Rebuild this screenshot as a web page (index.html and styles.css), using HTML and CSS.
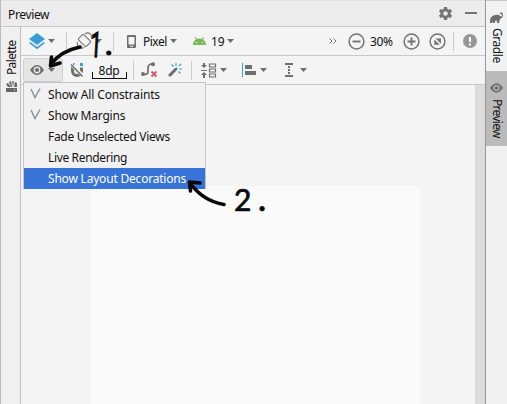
FILE: index.html
```html
<!DOCTYPE html>
<html lang="en">
<head>
<meta charset="utf-8">
<title>Preview</title>
<link rel="stylesheet" href="styles.css">
</head>
<body>
<div class="window">
  <div class="panel">
    <header class="header">
      <span class="title">Preview</span>
      <svg class="gear" width="13" height="13" viewBox="0 0 13 13"><path fill="#737373" fill-rule="evenodd" d="M5 0h3l.4 2 1.200.7 2-.7 1.400 2.500-1.500 1.300v1.400L13 8.500l-1.400 2.500-2-.7-1.200.7L8 13H5l-.4-2-1.200-.7-2 .7L0 8.500l1.500-1.300V5.800L0 4.500 1.400 2l2 .7L4.600 2zM6.500 4.200a2.300 2.300 0 1 0 0 4.600 2.300 2.300 0 0 0 0-4.600z"/></svg>
      <span class="minimize"></span>
    </header>
    <div class="body">
      <aside class="palette">
        <span class="side-text palette-text">Palette</span>
        <svg width="11" height="11" viewBox="0 0 11 11"><path fill="#666" d="M0 7h11v4H0zM0 3l2-1 3 4H2zM3 1l2-1 1 6H5zM6 0l2 .5L7 6zM9 1l2 1v4H8z"/><path fill="#fff" d="M8 8.500h1v1H8z"/></svg>
      </aside>
      <main class="designer">
        <div class="toolbar top">
          <svg class="layers" width="16" height="17" viewBox="0 0 16 17"><path fill="#389fd6" d="M8 0l8 6-8 6-8-6z"/><path fill="#389fd6" d="M0 10l1.300-1L8 14l6.700-5 1.300 1-8 6.300z"/></svg>
          <i class="caret c1"></i><i class="sep s1"></i>
          <svg class="rotate" width="17" height="17" viewBox="0 0 17 17" fill="none" stroke="#737373" stroke-width="1.100"><rect x="4.700" y="3" width="7.500" height="11" rx="1.200" transform="rotate(-45 8.500 8.500)"/><path d="M9 1.500c4-2 7.500 1 6.500 5.500M1.500 10c-1 4 2.500 7.500 6.500 5.500"/></svg>
          <i class="caret c2"></i><i class="sep s2"></i>
          <svg class="phone" width="9" height="13" viewBox="0 0 9 13"><path fill="#6e6e6e" fill-rule="evenodd" d="M1 0h7q1 0 1 1v11q0 1-1 1H1q-1 0-1-1V1q0-1 1-1zm.5 2v7.500h6V2zM3 10.700v1h3v-1z"/></svg>
          <span class="pixel">Pixel</span><i class="caret c3"></i>
          <svg class="android" width="13" height="8" viewBox="0 0 13 8"><path d="M0 8c.1-2.500 1.200-4.500 3-5.500L1.700.5l.8-.4L4 2q2.500-.8 5 0L10.500.1l.8.4L10 2.500c1.800 1 2.900 3 3 5.500z" fill="#78b857"/><path fill="#fff" d="M3 5h1.200v1.200H3zM8.800 5H10v1.200H8.800z"/></svg>
          <span class="api">19</span><i class="caret c4"></i>
          <svg class="more" width="8" height="6" viewBox="0 0 8 6"><path d="M.5.5L3 3 .5 5.500M4.500.5L7 3 4.500 5.500" fill="none" stroke="#777"/></svg>
          <svg class="zoom-out" width="17" height="17" viewBox="0 0 17 17" fill="none" stroke="#737373"><circle cx="8.500" cy="8.500" r="7.400" stroke-width="1.500"/><path d="M4.500 8.500h8" stroke-width="1.900"/></svg>
          <span class="percent">30%</span>
          <svg class="zoom-in" width="17" height="17" viewBox="0 0 17 17" fill="none" stroke="#737373"><circle cx="8.500" cy="8.500" r="7.400" stroke-width="1.500"/><path d="M4.500 8.500h8M8.500 4.500v8" stroke-width="1.900"/></svg>
          <svg class="zoom-fit" width="17" height="17" viewBox="0 0 17 17"><circle cx="8.500" cy="8.500" r="7.400" fill="none" stroke="#737373" stroke-width="1.500"/><path fill="#737373" d="M6.500 5.500H12v5.300zM5.300 6.500v5.200h5.500z"/></svg>
          <i class="sep s3"></i>
          <svg class="alert" width="14" height="14" viewBox="0 0 14 14"><circle cx="7" cy="7" r="7" fill="#969696"/><path fill="#fff" d="M6 3h2v5H6zM6 9.500h2v2H6z"/></svg>
        </div>
        <div class="toolbar second">
          <button class="view" aria-label="View options">
            <svg width="14" height="10" viewBox="0 0 14 10"><path d="M0 5q7-10 14 0-7 10-14 0z" fill="#6e6e6e"/><circle cx="7" cy="5" r="3.400" fill="#e5e5e5"/><circle cx="7" cy="5" r="2" fill="#6e6e6e"/></svg><i class="caret"></i>
          </button>
          <svg class="magnet" width="14" height="14" viewBox="0 0 14 14"><path d="M2.500 4v4a4.500 4.500 0 0 0 9 0V4.500" fill="none" stroke="#6e6e6e" stroke-width="3"/><path d="M0 0l14 14" stroke="#f4f4f4" stroke-width="3.500"/><path d="M1 1.500l11.500 12" stroke="#6e6e6e" stroke-width="1.600"/><path fill="#389fd6" d="M10 0h3v3h-3zM3 0h1.500v2H3z"/></svg>
          <div class="dp">8dp</div><i class="sep s4"></i>
          <svg class="curve" width="17" height="16" viewBox="0 0 17 16"><path d="M2 12.500h2q3 0 3-3V6q0-4 4-4h1" fill="none" stroke="#6e6e6e" stroke-width="1.700"/><circle cx="2" cy="12" r="2" fill="#6e6e6e"/><circle cx="12" cy="2.300" r="2" fill="#6e6e6e"/><path d="M10.500 9.500l5 5m0-5l-5 5" stroke="#db5860" stroke-width="1.900"/></svg>
          <svg class="wand" width="14" height="14" viewBox="0 0 14 14"><path d="M1 13l7-7" stroke="#6e6e6e" stroke-width="3"/><path d="M7 7l2-2" stroke="#6e6e6e" stroke-width="2"/><path d="M8 0v3M3.500 1.500l2 2M11 3l2-2M11 6h3M10.500 8.500l2 2" stroke="#389fd6" stroke-width="1.100"/></svg>
          <i class="sep s5"></i>
          <svg class="pack" width="16" height="15" viewBox="0 0 16 15"><path d="M0 7h6v1H0zM2 0h2v2h2L3 5 0 2h2zM3 9l3 3H4v3H2v-3H0z" fill="#6e6e6e"/><path d="M8.500 1h6v3h-6zM8.500 6h6v3h-6zM8.500 11h6v3h-6z" fill="none" stroke="#6e6e6e" stroke-width="1.200"/></svg><i class="caret c5"></i>
          <svg class="align" width="14" height="14" viewBox="0 0 14 14"><path fill="#389fd6" d="M0 0h1v14H0z"/><path fill="#6e6e6e" d="M3 2h7v4H3zM3 8h11v4H3z"/></svg><i class="caret c6"></i>
          <svg class="guide" width="8" height="14" viewBox="0 0 8 14" fill="none" stroke="#6e6e6e" stroke-width="2"><path d="M0 1h8M0 13h8"/><path d="M4 3v8" stroke-dasharray="2 1"/></svg><i class="caret c7"></i>
        </div>
        <div class="canvas"><div class="surface"></div><div class="scrollbar"></div></div>
      </main>
    </div>
  </div>
  <nav class="tabs">
    <div class="tab gradle"><svg width="13" height="11" viewBox="0 0 13 11"><path fill="#6e6e6e" d="M0 11C0 6 1 4 5 3q4-1 5 1 2 1 2-1 0-1.500-1.700-1Q9 2 10 1q2-2 3 1 0 4-3 5l-1 4H7V9Q6 8 5 9v2H3V9L2 11z"/></svg><span class="side-text">Gradle</span></div>
    <div class="tab preview"><svg width="13" height="10" viewBox="0 0 14 10"><path d="M0 5q7-10 14 0-7 10-14 0z" fill="#6e6e6e"/><circle cx="7" cy="5" r="3.300" fill="#bbb"/><circle cx="7" cy="5" r="2" fill="#6e6e6e"/></svg><span class="side-text">Preview</span></div>
  </nav>
  <ul class="menu">
    <li><svg width="11" height="11" viewBox="0 0 11 11"><path d="M1 1l4 8.500L10 .5" fill="none" stroke="#8d9296" stroke-width="1.500"/></svg><span class="m1">Show All Constraints</span></li>
    <li><svg width="11" height="11" viewBox="0 0 11 11"><path d="M1 1l4 8.500L10 .5" fill="none" stroke="#8d9296" stroke-width="1.500"/></svg><span class="m2">Show Margins</span></li>
    <li><span class="m3">Fade Unselected Views</span></li>
    <li><span class="m4">Live Rendering</span></li>
    <li class="selected"><span class="m5">Show Layout Decorations</span></li>
  </ul>
  <svg class="ink" width="507" height="404" viewBox="0 0 507 404" fill="none" stroke="#0a0a0a" stroke-linecap="round" stroke-linejoin="round"><path d="M80 47Q61 51 51 64" stroke-width="3.600"/><path d="M51.500 57L50.500 66 60 63" stroke-width="3.600"/><path d="M224 204.500Q203 201 190 183" stroke-width="3.600"/><path d="M190.500 191L189.500 182 200 183" stroke-width="3.600"/></svg>
  <div class="note one"><span>1</span><b>.</b></div><div class="note two"><span>2</span><b>.</b></div>
</div>
</body>
</html>
```
FILE: styles.css
```css
* { box-sizing: border-box; }
body { margin: 0; font: 12px/16px "Noto Sans", sans-serif; color: #111; overflow: hidden; }
svg { display: block; flex: none; }
.window { position: relative; display: flex; width: 507px; height: 404px; background: #f4f4f4; }
.panel { width: 485px; display: flex; flex-direction: column; border-left: 1px solid #bdbdbd; }
.header { height: 27px; flex: none; display: flex; align-items: center; background: #ececec; border-bottom: 1px solid #c8c8c8; border-top: 1px solid #e0e0e0; padding-left: 7px; }
.title { width: 431px; letter-spacing: -.35px; padding-top: 2px; }
.gear { margin-top: -1px; }
.minimize { width: 12px; height: 2px; background: #737373; margin: -2px 0 0 13px; }
.body { flex: 1; display: flex; }
.palette { width: 20px; background: #f0f0f0; border-right: 1px solid #bdbdbd; display: flex; flex-direction: column; align-items: center; padding: 13px 0 0 2px; gap: 6px; }
.side-text { writing-mode: vertical-rl; font-size: 12px; line-height: 16px; }
.palette-text { transform: rotate(180deg); height: 35px; letter-spacing: -.65px; }
.designer { flex: 1; display: flex; flex-direction: column; min-width: 0; }
.toolbar { display: flex; align-items: center; flex: none; border-bottom: 1px solid #c8c8c8; white-space: nowrap; }
.top { height: 29px; }
.second { height: 29px; }
.caret { flex: none; width: 7px; height: 4px; background: #6e6e6e; clip-path: polygon(0 0, 100% 0, 50% 100%); }
.sep { flex: none; width: 1px; height: 19px; background: #cbcbcb; }
.layers { margin-left: 8px; }
.c1 { margin-left: 3px; }
.s1 { margin-left: 11px; }
.rotate { margin-left: 9px; margin-top: -2px; }
.c2 { margin-left: 2px; }
.s2 { margin-left: 11px; }
.phone { margin-left: 13px; }
.pixel { margin-left: 7px; width: 25px; letter-spacing: -.5px; padding-top: 2px; }
.c3 { margin-left: 2px; }
.android { margin-left: 16px; }
.api { margin-left: 5px; width: 14px; padding-top: 2px; }
.c4 { margin-left: 2px; }
.more { margin-left: 95px; }
.zoom-out { margin-left: 11px; }
.percent { margin-left: 5px; width: 24px; letter-spacing: -.4px; padding-top: 2px; }
.zoom-in { margin-left: 9px; }
.zoom-fit { margin-left: 9px; }
.s3 { margin-left: 7px; }
.alert { margin-left: 9px; }
.view { margin: 0 0 0 2px; width: 40px; height: 24px; display: flex; align-items: center; gap: 4px; border: 1px solid #cfcfcf; border-radius: 3px; background: #e5e5e5; padding: 0 0 0 6px; }
.magnet { margin-left: 7px; }
.dp { margin-left: 8px; width: 35px; height: 15px; margin-top: 3px; text-align: center; line-height: 14px; padding-right: 1px; border-bottom: 1px solid #111; background: linear-gradient(#111, #111) 0 100%/1px 6px no-repeat, linear-gradient(#111, #111) 100% 100%/1px 6px no-repeat; letter-spacing: -.2px; }
.s4 { margin-left: 6px; }
.curve { margin-left: 7px; }
.wand { margin-left: 10px; }
.s5 { margin-left: 9px; }
.pack { margin-left: 9px; }
.c5 { margin-left: 3px; }
.align { margin-left: 15px; }
.c6 { margin-left: 4px; }
.guide { margin-left: 18px; }
.c7 { margin-left: 7px; }
.canvas { flex: 1; display: flex; background: #f4f4f4; }
.surface { width: 329px; margin: 101px 55px 0 70px; background: #fafafa; }
.scrollbar { width: 10px; background: #dcdcdc; border-left: 1px solid #d5d5d5; }
.tabs { width: 22px; border-left: 1px solid #979797; background: #f0f0f0; }
.tab { display: flex; flex-direction: column; align-items: center; gap: 5px; }
.gradle { height: 71px; padding-top: 11px; background: #f2f2f2; border-top: 1px solid #c8c8c8; letter-spacing: -.45px; }
.preview { height: 75px; padding-top: 12px; background: #bbb; letter-spacing: -.7px; gap: 6px; }
.menu { position: absolute; left: 23px; top: 82px; width: 183px; height: 107px; margin: 0; padding: 1px 0 0; border: 1px solid #c4c4c4; background: #f1f1f1; list-style: none; }
.menu li { display: flex; align-items: center; height: 21px; padding-left: 24px; white-space: nowrap; }
.menu li svg { margin: -2px 7px 0 -18px; }
.menu span { padding-top: 1px; }
.menu .selected { background: #3874d8; color: #fff; }
.m1 { letter-spacing: -.15px; }
.m2 { letter-spacing: -.2px; }
.m3 { letter-spacing: -.3px; }
.m4 { letter-spacing: -.35px; }
.m5 { letter-spacing: -.2px; }
.ink { position: absolute; left: 0; top: 0; pointer-events: none; }
.note { position: absolute; display: flex; font: 30px/30px Lato, sans-serif; color: #0a0a0a; -webkit-text-stroke: .7px #0a0a0a; }
.note b { font-weight: 700; }
.one { left: 86px; top: 31px; font-family: Roboto, sans-serif; }
.one span { font-size: 35px; transform: scaleX(.55) skewX(-6deg); -webkit-text-stroke-width: 1.5px; }
.one b { margin-left: -1px; font-size: 28px; }
.two { left: 234px; top: 184px; }
.two b { margin-left: 7px; }
```
